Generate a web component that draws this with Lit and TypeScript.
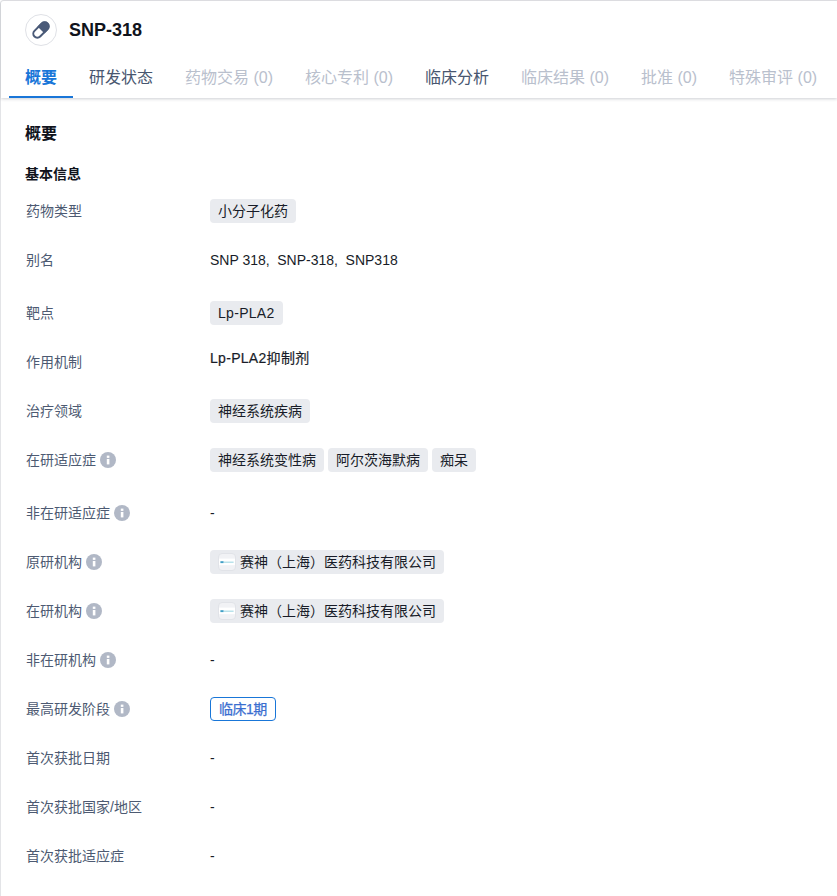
import { LitElement, html, css, svg } from "lit";
import { customElement } from "lit/decorators.js";

const tabs: [string, string][] = [
  ["概要", "active"],
  ["研发状态", ""],
  ["药物交易 (0)", "off"],
  ["核心专利 (0)", "off"],
  ["临床分析", ""],
  ["临床结果 (0)", "off"],
  ["批准 (0)", "off"],
  ["特殊审评 (0)", "off"],
];

type Row = { label: string; info?: boolean; tall?: boolean; kind: "tags" | "text" | "raised" | "org" | "phase" | "alias"; values: string[] };

const rows: Row[] = [
  { label: "药物类型", kind: "tags", values: ["小分子化药"] },
  { label: "别名", kind: "alias", tall: true, values: ["SNP 318,", "SNP-318,", "SNP318"] },
  { label: "靶点", kind: "tags", values: ["Lp-PLA2"] },
  { label: "作用机制", kind: "raised", values: ["Lp-PLA2抑制剂"] },
  { label: "治疗领域", kind: "tags", values: ["神经系统疾病"] },
  { label: "在研适应症", info: true, tall: true, kind: "tags", values: ["神经系统变性病", "阿尔茨海默病", "痴呆"] },
  { label: "非在研适应症", info: true, kind: "text", values: ["-"] },
  { label: "原研机构", info: true, kind: "org", values: ["赛神（上海）医药科技有限公司"] },
  { label: "在研机构", info: true, kind: "org", values: ["赛神（上海）医药科技有限公司"] },
  { label: "非在研机构", info: true, kind: "text", values: ["-"] },
  { label: "最高研发阶段", info: true, kind: "phase", values: ["临床1期"] },
  { label: "首次获批日期", kind: "text", values: ["-"] },
  { label: "首次获批国家/地区", kind: "text", values: ["-"] },
  { label: "首次获批适应症", kind: "text", values: ["-"] },
];

const infoIcon = svg`<svg class="info" viewBox="0 0 16 16" width="16" height="16">
  <circle cx="8" cy="8" r="8" fill="#b1b8c6"/>
  <rect x="6.8" y="7" width="2.6" height="5.4" fill="#fff"/>
  <rect x="6.8" y="3.6" width="2.6" height="2.3" fill="#fff"/>
</svg>`;

const pill = svg`<svg viewBox="-1 -1 20 20" width="20" height="20">
  <g transform="rotate(-45 9 9)">
    <rect x="-0.2" y="5" width="18.4" height="8" rx="4" fill="#fff" stroke="#4a5a78" stroke-width="2"/>
    <path d="M9 4 H14 A5 5 0 0 1 14 14 H9 Z" fill="#4a5a78"/>
  </g>
</svg>`;

const logo = svg`<svg viewBox="0 0 16 16" width="16" height="16">
  <rect x="0" y="4.6" width="16" height="6.6" fill="#fff"/>
  <rect x="1.4" y="7.2" width="3.2" height="1.9" fill="#3f9fc6"/>
  <rect x="5" y="7.6" width="9.6" height="1.2" fill="#a8dbe6"/>
</svg>`;

@customElement("app-root")
export class AppRoot extends LitElement {
  static styles = css`
    :host {
      display: block;
      height: 896px;
      overflow: hidden;
      background: #fff;
      font-family: "Liberation Sans", "Noto Sans CJK SC", sans-serif;
      color: #181c28;
    }
    .card {
      height: 896px;
      box-sizing: border-box;
      border-top: 1px solid #e3e4e7;
      border-left: 1px solid #e3e4e7;
      border-top-left-radius: 4px;
    }
    .head {
      height: 97px;
      box-sizing: border-box;
      box-shadow: 0 1px 3px rgba(30, 40, 60, 0.22);
      position: relative;
    }
    .title {
      display: flex;
      align-items: center;
      gap: 12px;
      padding: 13px 0 0 24px;
      height: 32px;
    }
    .avatar {
      width: 30px;
      height: 30px;
      border: 1px solid #dfe1e6;
      border-radius: 50%;
      display: flex;
      align-items: center;
      justify-content: center;
    }
    h1 {
      margin: 0;
      font-size: 18px;
      font-weight: 700;
      line-height: 32px;
      color: #10131c;
    }
    .tabs {
      display: flex;
      margin: 6px 0 0 8px;
      height: 46px;
    }
    .tab {
      padding: 0 16px;
      font-size: 16px;
      line-height: 52px;
      height: 46px;
      white-space: nowrap;
      color: #48566f;
      box-sizing: border-box;
    }
    .tab.off {
      color: #b9c0cd;
    }
    .tab.active {
      color: #1976d8;
      font-weight: 700;
      border-bottom: 2px solid #1976d8;
    }
    .body {
      padding: 0 0 0 24px;
    }
    h2 {
      margin: 0;
      padding-top: 24px;
      font-size: 16px;
      font-weight: 700;
      line-height: 24px;
      color: #10131c;
    }
    h3 {
      margin: 0;
      padding-top: 16px;
      height: 24px;
      font-size: 14px;
      font-weight: 700;
      line-height: 24px;
      color: #10131c;
      margin-bottom: 12px;
    }
    .row {
      display: grid;
      grid-template-columns: 185px 1fr;
      height: 49px;
    }
    .row.tall {
      height: 53px;
    }
    .label {
      display: flex;
      align-items: center;
      gap: 4px;
      height: 24px;
      font-size: 14px;
      color: #4d5a72;
      white-space: nowrap;
    }
    .label span {
      padding-left: 1px;
    }
    .info {
      display: block;
      margin-top: 2px;
    }
    .values {
      display: flex;
      gap: 4px;
      align-items: flex-start;
      padding-top: 1px;
      font-size: 14px;
      line-height: 24px;
      color: #181c28;
    }
    .tag {
      height: 24px;
      padding: 0 8px;
      border-radius: 4px;
      background: #e9ebef;
      white-space: nowrap;
    }
    .wide {
      letter-spacing: 0.3px;
    }
    .org {
      display: flex;
      align-items: center;
      gap: 4px;
    }
    .logo {
      width: 16px;
      height: 16px;
      border: 1px solid #e1e3e8;
      border-radius: 4px;
      background: #f1f2f5;
      overflow: hidden;
      display: block;
    }
    .logo svg {
      display: block;
    }
    .raised {
      margin-top: -4px;
      -webkit-text-stroke: 0.2px #181c28;
    }
    .alias {
      display: flex;
      gap: 7.6px;
    }
    .phase {
      box-sizing: border-box;
      height: 24px;
      padding: 0 8px;
      line-height: 22px;
      letter-spacing: -0.5px;
      border: 1px solid #1976d8;
      border-radius: 4px;
      color: #3a6ed0;
      -webkit-text-stroke: 0.25px #3a6ed0;
      white-space: nowrap;
    }
  `;

  private value(r: Row) {
    switch (r.kind) {
      case "tags":
        return r.values.map((v) => html`<div class="tag ${v.startsWith("Lp") ? "wide" : ""}">${v}</div>`);
      case "org":
        return r.values.map(
          (v) => html`<div class="tag org"><span class="logo">${logo}</span><span>${v}</span></div>`
        );
      case "phase":
        return html`<div class="phase">${r.values[0]}</div>`;
      case "raised":
        return html`<div class="raised wide">${r.values[0]}</div>`;
      case "alias":
        return html`<div class="alias">${r.values.map((v) => html`<span>${v}</span>`)}</div>`;
      default:
        return html`<div>${r.values[0]}</div>`;
    }
  }

  render() {
    return html`<div class="card">
      <div class="head">
        <div class="title">
          <div class="avatar">${pill}</div>
          <h1>SNP-318</h1>
        </div>
        <div class="tabs">
          ${tabs.map(([t, c]) => html`<div class="tab ${c}">${t}</div>`)}
        </div>
      </div>
      <div class="body">
        <h2>概要</h2>
        <h3>基本信息</h3>
        ${rows.map(
          (r) => html`<div class="row ${r.tall ? "tall" : ""}">
            <div class="label"><span>${r.label}</span>${r.info ? infoIcon : ""}</div>
            <div class="values">${this.value(r)}</div>
          </div>`
        )}
      </div>
    </div>`;
  }
}
